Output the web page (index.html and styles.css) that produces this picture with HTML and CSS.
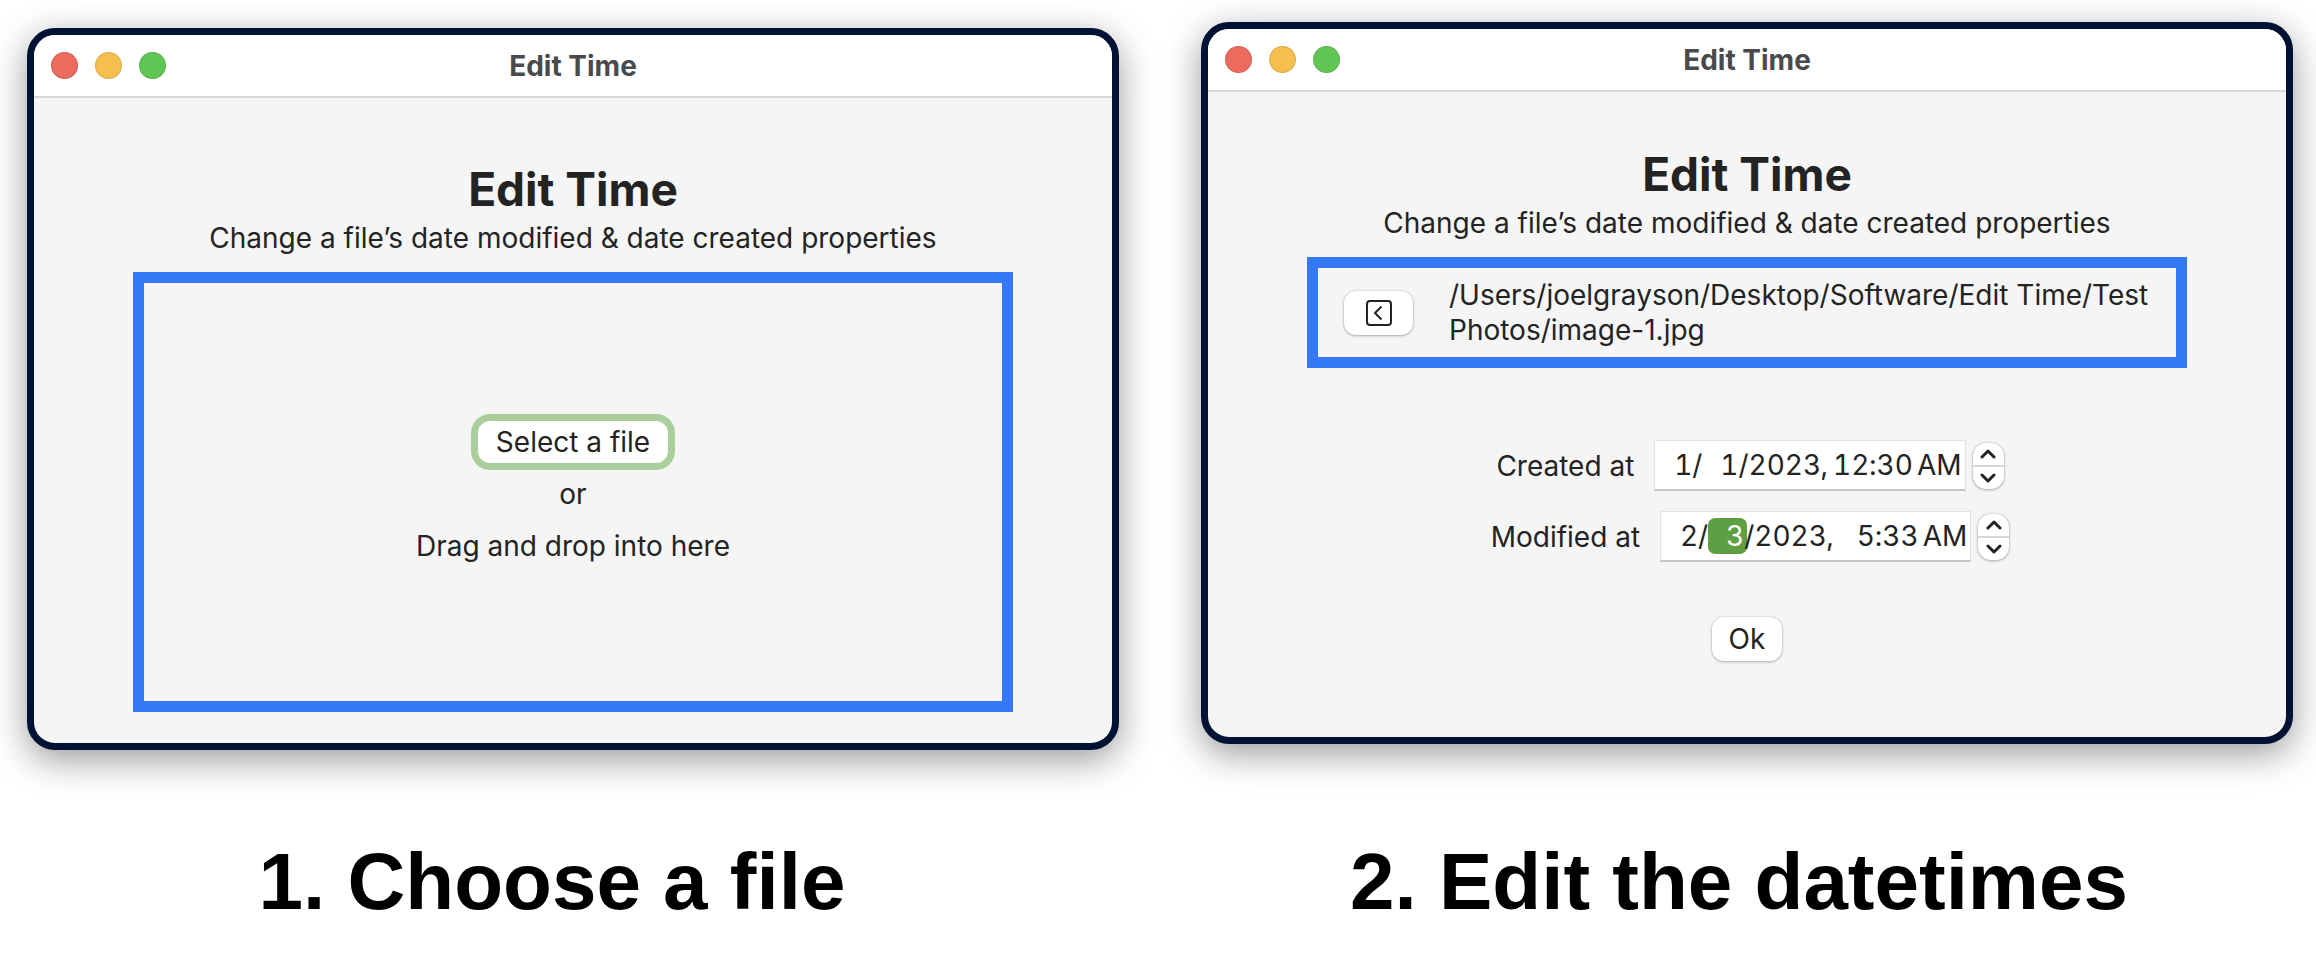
FILE: index.html
```html
<!DOCTYPE html>
<html lang="en">
<head>
<meta charset="utf-8">
<title>Edit Time</title>
<link rel="stylesheet" href="styles.css">
</head>
<body>
<main class="steps">
  <figure class="step step-choose">
    <section class="window">
      <header class="titlebar">
        <div class="lights"><span class="light red"></span><span class="light yellow"></span><span class="light green"></span></div>
        <span class="window-title">Edit Time</span>
      </header>
      <div class="body">
        <h1 class="heading">Edit Time</h1>
        <p class="subtitle">Change a file’s date modified &amp; date created properties</p>
        <div class="drop-zone">
          <button class="button select-button" type="button">Select a file</button>
          <p class="hint">or</p>
          <p class="hint">Drag and drop into here</p>
        </div>
      </div>
    </section>
    <figcaption class="caption">1. Choose a file</figcaption>
  </figure>

  <figure class="step step-edit">
    <section class="window">
      <header class="titlebar">
        <div class="lights"><span class="light red"></span><span class="light yellow"></span><span class="light green"></span></div>
        <span class="window-title">Edit Time</span>
      </header>
      <form class="body">
        <h1 class="heading">Edit Time</h1>
        <p class="subtitle">Change a file’s date modified &amp; date created properties</p>
        <div class="file-row">
          <button class="button back-button" type="button" aria-label="Back">
            <svg class="back-icon" viewBox="0 0 26 26" aria-hidden="true"><rect x="1" y="1" width="24" height="24" rx="3"/><path d="M15.500 6.500 9 13l6.500 6.500"/></svg>
          </button>
          <p class="path">/Users/joelgrayson/Desktop/Software/Edit Time/Test Photos/image-1.jpg</p>
        </div>
        <div class="fields">
          <div class="field-row">
            <label class="label" for="created-month">Created at</label>
            <div class="date-field">
              <input class="part two" id="created-month" aria-label="Created at month" value="1"><span class="mark">/</span>
              <input class="part two" aria-label="Created at day" value="1"><span class="mark">/</span>
              <input class="part four" aria-label="Created at year" value="2023"><span class="mark comma">,</span>
              <input class="part two" aria-label="Created at hour" value="12"><span class="mark">:</span>
              <input class="part two" aria-label="Created at minute" value="30">
              <input class="part meridiem" aria-label="Created at AM or PM" value="AM">
            </div>
            <div class="stepper">
              <button class="step-button" type="button" aria-label="Increase created at"><svg class="chevron" viewBox="0 0 16 10" aria-hidden="true"><path d="m2 8 6-6 6 6"/></svg></button>
              <button class="step-button" type="button" aria-label="Decrease created at"><svg class="chevron" viewBox="0 0 16 10" aria-hidden="true"><path d="m2 2 6 6 6-6"/></svg></button>
            </div>
          </div>
          <div class="field-row">
            <label class="label" for="modified-month">Modified at</label>
            <div class="date-field">
              <input class="part two" id="modified-month" aria-label="Modified at month" value="2"><span class="mark">/</span>
              <input class="part two selected" aria-label="Modified at day" value="3"><span class="mark">/</span>
              <input class="part four" aria-label="Modified at year" value="2023"><span class="mark comma">,</span>
              <input class="part two" aria-label="Modified at hour" value="5"><span class="mark">:</span>
              <input class="part two" aria-label="Modified at minute" value="33">
              <input class="part meridiem" aria-label="Modified at AM or PM" value="AM">
            </div>
            <div class="stepper">
              <button class="step-button" type="button" aria-label="Increase modified at"><svg class="chevron" viewBox="0 0 16 10" aria-hidden="true"><path d="m2 8 6-6 6 6"/></svg></button>
              <button class="step-button" type="button" aria-label="Decrease modified at"><svg class="chevron" viewBox="0 0 16 10" aria-hidden="true"><path d="m2 2 6 6 6-6"/></svg></button>
            </div>
          </div>
        </div>
        <button class="button ok-button" type="button">Ok</button>
      </form>
    </section>
    <figcaption class="caption">2. Edit the datetimes</figcaption>
  </figure>
</main>
</body>
</html>
```
FILE: styles.css
```css
* {
  box-sizing: border-box;
}

body {
  margin: 0;
  background: #fff;
  color: #232323;
  font: 28px/34px Inter, "Liberation Sans", sans-serif;
}

p,
h1,
figure {
  margin: 0;
}

button,
input {
  font: inherit;
  color: inherit;
}

.steps {
  display: grid;
  grid-template-columns: 1fr 1fr;
  column-gap: 82px;
  padding: 0 23px 34px 27px;
}

.step {
  display: flex;
  flex-direction: column;
}

.step-choose {
  padding-top: 28px;
}

.step-edit {
  padding-top: 22px;
}

.window {
  display: flex;
  flex-direction: column;
  aspect-ratio: 1092 / 722;
  border: 7px solid #001233;
  border-radius: 28px;
  background: #f5f5f5;
  box-shadow: 0 10px 36px rgba(0, 0, 0, 0.4);
}

.titlebar {
  display: grid;
  grid-template-columns: 1fr auto 1fr;
  align-items: center;
  height: 63px;
  padding: 0 17px;
  border-bottom: 2px solid #d6d6d6;
  border-radius: 21px 21px 0 0;
  background: #fff;
}

.lights {
  display: flex;
  gap: 17px;
}

.light {
  width: 27px;
  height: 27px;
  border: 1px solid rgba(0, 0, 0, 0.1);
  border-radius: 50%;
}

.red {
  background: #ec6a5e;
}

.yellow {
  background: #f4bf4f;
}

.green {
  background: #61c554;
}

.window-title {
  color: #4a4a4a;
  font-weight: 700;
}

.body {
  display: flex;
  flex: 1;
  flex-direction: column;
  align-items: center;
  padding: 62px 99px 31px;
}

.step-edit .body {
  padding-top: 53px;
}

.heading {
  font-size: 46px;
  line-height: 58px;
  font-weight: 700;
}

.subtitle {
  margin: 3px 0 17px;
}

.drop-zone {
  display: flex;
  flex: 1;
  flex-direction: column;
  align-items: center;
  justify-content: center;
  align-self: stretch;
  border: 11px solid #3478f6;
}

.button {
  padding: 0 17px;
  border: 0;
  border-radius: 12px;
  background: #fff;
  box-shadow: 0 0 2px rgba(0, 0, 0, 0.2), 0 1px 3px rgba(0, 0, 0, 0.25);
}

.select-button {
  height: 42px;
  padding: 0 18px;
  box-shadow: 0 0 0 7px #a9cd9b;
}

.hint {
  margin-top: 18px;
}

.select-button + .hint {
  margin-top: 14px;
}

.file-row {
  display: flex;
  align-items: center;
  align-self: stretch;
  gap: 36px;
  padding: 10px 20px 9px 26px;
  border: 11px solid #3478f6;
}

.back-button {
  display: flex;
  flex: none;
  align-items: center;
  justify-content: center;
  width: 69px;
  height: 44px;
}

.back-icon {
  flex: none;
  width: 26px;
  height: 26px;
  fill: none;
  stroke: #232323;
  stroke-width: 2;
}

.path {
  line-height: 35px;
}

.fields {
  display: flex;
  flex-direction: column;
  align-items: center;
  gap: 20px;
  margin: 72px 0 55px;
  padding-left: 6px;
}

.field-row {
  display: flex;
  align-items: center;
}

.label {
  margin-right: 20px;
}

.date-field {
  display: flex;
  align-items: center;
  height: 51px;
  margin-right: 7px;
  padding: 0 3px 0 1px;
  border: 1px solid #e2e2e2;
  border-bottom: 2px solid #c4c4c4;
  background: #fff;
  font-variant-numeric: tabular-nums;
}

.part {
  height: 36px;
  padding: 0;
  border: 0;
  background: none;
  text-align: right;
}

.two {
  width: 36px;
}

.four {
  width: 72px;
}

.meridiem {
  width: 49px;
}

.mark {
  z-index: 1;
}

.comma {
  margin-right: 5px;
}

.selected {
  width: 39px;
  margin-right: -3px;
  padding-right: 3px;
  border-radius: 7px;
  background: #5f9f43;
  color: #fff;
}

.stepper {
  display: flex;
  flex-direction: column;
  width: 31px;
  height: 46px;
  border-radius: 13px;
  background: #fff;
  box-shadow: 0 0 2px rgba(0, 0, 0, 0.25), 0 1px 3px rgba(0, 0, 0, 0.25);
}

.step-button {
  display: flex;
  flex: 1;
  align-items: center;
  justify-content: center;
  padding: 0;
  border: 0;
  background: none;
}

.step-button + .step-button {
  border-top: 2px solid #d6d6d6;
}

.chevron {
  width: 16px;
  height: 10px;
  fill: none;
  stroke: #232323;
  stroke-width: 3;
  stroke-linecap: round;
  stroke-linejoin: round;
}

.ok-button {
  height: 44px;
}

.caption {
  margin-top: auto;
  padding-top: 88px;
  color: #000;
  font: 700 80px/88px "Liberation Sans", Arial, sans-serif;
  text-align: center;
}

.step-choose .caption {
  padding-right: 42px;
}

.step-edit .caption {
  padding-right: 16px;
}
```
